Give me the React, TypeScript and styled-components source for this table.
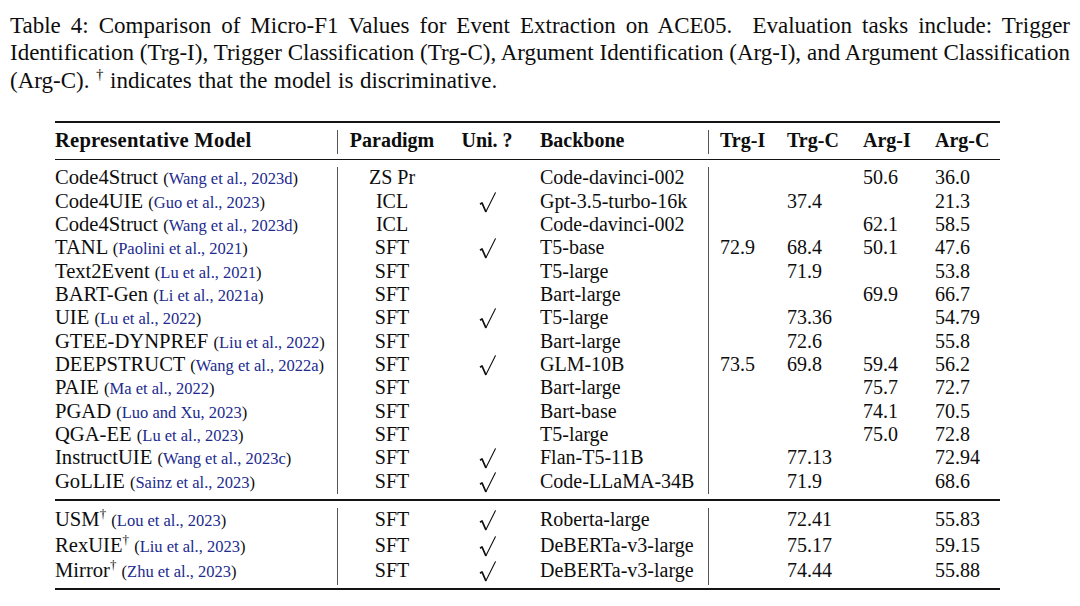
import * as React from 'react';
import styled, { createGlobalStyle } from 'styled-components';

type Row = {
  model: string;
  cite: string;
  paradigm: string;
  uni: boolean;
  backbone: string;
  scores: [string, string, string, string];
  disc?: boolean;
};

const generative: Row[] = [
  { model: 'Code4Struct', cite: 'Wang et al., 2023d', paradigm: 'ZS Pr', uni: false, backbone: 'Code-davinci-002', scores: ['', '', '50.6', '36.0'] },
  { model: 'Code4UIE', cite: 'Guo et al., 2023', paradigm: 'ICL', uni: true, backbone: 'Gpt-3.5-turbo-16k', scores: ['', '37.4', '', '21.3'] },
  { model: 'Code4Struct', cite: 'Wang et al., 2023d', paradigm: 'ICL', uni: false, backbone: 'Code-davinci-002', scores: ['', '', '62.1', '58.5'] },
  { model: 'TANL', cite: 'Paolini et al., 2021', paradigm: 'SFT', uni: true, backbone: 'T5-base', scores: ['72.9', '68.4', '50.1', '47.6'] },
  { model: 'Text2Event', cite: 'Lu et al., 2021', paradigm: 'SFT', uni: false, backbone: 'T5-large', scores: ['', '71.9', '', '53.8'] },
  { model: 'BART-Gen', cite: 'Li et al., 2021a', paradigm: 'SFT', uni: false, backbone: 'Bart-large', scores: ['', '', '69.9', '66.7'] },
  { model: 'UIE', cite: 'Lu et al., 2022', paradigm: 'SFT', uni: true, backbone: 'T5-large', scores: ['', '73.36', '', '54.79'] },
  { model: 'GTEE-DYNPREF', cite: 'Liu et al., 2022', paradigm: 'SFT', uni: false, backbone: 'Bart-large', scores: ['', '72.6', '', '55.8'] },
  { model: 'DEEPSTRUCT', cite: 'Wang et al., 2022a', paradigm: 'SFT', uni: true, backbone: 'GLM-10B', scores: ['73.5', '69.8', '59.4', '56.2'] },
  { model: 'PAIE', cite: 'Ma et al., 2022', paradigm: 'SFT', uni: false, backbone: 'Bart-large', scores: ['', '', '75.7', '72.7'] },
  { model: 'PGAD', cite: 'Luo and Xu, 2023', paradigm: 'SFT', uni: false, backbone: 'Bart-base', scores: ['', '', '74.1', '70.5'] },
  { model: 'QGA-EE', cite: 'Lu et al., 2023', paradigm: 'SFT', uni: false, backbone: 'T5-large', scores: ['', '', '75.0', '72.8'] },
  { model: 'InstructUIE', cite: 'Wang et al., 2023c', paradigm: 'SFT', uni: true, backbone: 'Flan-T5-11B', scores: ['', '77.13', '', '72.94'] },
  { model: 'GoLLIE', cite: 'Sainz et al., 2023', paradigm: 'SFT', uni: true, backbone: 'Code-LLaMA-34B', scores: ['', '71.9', '', '68.6'] },
];

const discriminative: Row[] = [
  { model: 'USM', cite: 'Lou et al., 2023', paradigm: 'SFT', uni: true, backbone: 'Roberta-large', scores: ['', '72.41', '', '55.83'], disc: true },
  { model: 'RexUIE', cite: 'Liu et al., 2023', paradigm: 'SFT', uni: true, backbone: 'DeBERTa-v3-large', scores: ['', '75.17', '', '59.15'], disc: true },
  { model: 'Mirror', cite: 'Zhu et al., 2023', paradigm: 'SFT', uni: true, backbone: 'DeBERTa-v3-large', scores: ['', '74.44', '', '55.88'], disc: true },
];

// column widths, table starts at x=55 and ends at x=1000
const COLUMNS = '282px 109px 82px 180px 67px 76px 72px 77px';
const SCORE_PAD = [11, 12, 12, 12];

// the \checkmark of the paper: short heavy hook, long hairline up to the right
const CheckMark = () => (
  <CheckSvg width="17" height="21" viewBox="0 0 17 21">
    <polyline points="1,12.2 3,10.9 6.9,19.8" fill="none" stroke="#111" strokeWidth="1.7" strokeLinejoin="round" />
    <line x1="6.9" y1="19.8" x2="16.4" y2="0.8" stroke="#111" strokeWidth="1.1" strokeLinecap="round" />
  </CheckSvg>
);

const TableRow = ({ row, tall }: { row: Row; tall?: boolean }) => (
  <RowLine $height={tall ? 25.5 : 23.35} $lh={tall ? 22 : 20}>
    <ModelCell>
      {row.model}
      {row.disc && <Dagger>†</Dagger>} <Paren>(</Paren>
      <Cite>{row.cite}</Cite>
      <Paren>)</Paren>
    </ModelCell>
    <Cell $divider $align="center">{row.paradigm}</Cell>
    <Cell $align="center">{row.uni && <CheckMark />}</Cell>
    <Cell $pad={12}>{row.backbone}</Cell>
    {row.scores.map((s, idx) => (
      <Cell key={`score-${idx}`} $pad={SCORE_PAD[idx]} $divider={idx === 0}>
        {s}
      </Cell>
    ))}
  </RowLine>
);

export default function App() {
  return (
    <Page>
      <GlobalStyle />
      <Caption>
        <CaptionLine $full>
          Table 4: Comparison of Micro-F1 Values for Event Extraction on ACE05.&nbsp; Evaluation tasks include: Trigger
        </CaptionLine>
        <CaptionLine $full>
          Identification (Trg-I), Trigger Classification (Trg-C), Argument Identification (Arg-I), and Argument Classification
        </CaptionLine>
        <CaptionLine $spread>
          (Arg-C). <CaptionDagger>†</CaptionDagger> indicates that the model is discriminative.
        </CaptionLine>
      </Caption>

      <Table>
        <Rule $thick={2} $top={26.4} />
        <HeaderRow $height={23.35} $lh={20} $mt={7.7}>
          <ModelCell $wide>Representative Model</ModelCell>
          <Cell $divider $align="center">Paradigm</Cell>
          <Cell $align="center">Uni. ?</Cell>
          <Cell $pad={12}>Backbone</Cell>
          <Cell $divider $pad={11}>Trg-I</Cell>
          <Cell $pad={12}>Trg-C</Cell>
          <Cell $pad={12}>Arg-I</Cell>
          <Cell $pad={12}>Arg-C</Cell>
        </HeaderRow>
        <Rule $thick={1} $top={5.05} />
        <Group $top={7.45}>
          {generative.map((row, idx) => (
            <TableRow row={row} key={`gen-${idx}`} />
          ))}
        </Group>
        <Rule $thick={1.5} $top={5.1} />
        <Group $top={7.4}>
          {discriminative.map((row, idx) => (
            <TableRow row={row} tall key={`disc-${idx}`} />
          ))}
        </Group>
        <Rule $thick={2} $top={3.65} />
      </Table>
    </Page>
  );
}

const GlobalStyle = createGlobalStyle`
  html, body {
    margin: 0;
    padding: 0;
    background: #ffffff;
  }
  body {
    font-family: 'Liberation Serif', 'Times New Roman', serif;
    color: #0d0d0d;
  }
`;

const Page = styled.div`
  width: 1080px;
  height: 606px;
  overflow: hidden;
`;

const Caption = styled.div`
  padding: 11.8px 10px 0;
  width: 1060px;
  font-size: 23px;
  line-height: 27.5px;
`;

const CaptionLine = styled.div<{ $full?: boolean; $spread?: boolean }>`
  white-space: ${(p) => (p.$full ? 'normal' : 'nowrap')};
  text-align: ${(p) => (p.$full ? 'justify' : 'left')};
  text-align-last: ${(p) => (p.$full ? 'justify' : 'left')};
  word-spacing: ${(p) => (p.$spread ? '0.8px' : '0')};
`;

const CaptionDagger = styled.sup`
  font-size: 15px;
  line-height: 0;
  vertical-align: 9px;
`;

const Table = styled.div`
  margin-left: 55px;
  width: 945px;
  font-size: 20px;
`;

const Rule = styled.div<{ $thick: number; $top: number }>`
  height: ${(p) => p.$thick}px;
  margin-top: ${(p) => p.$top}px;
  background: #141414;
`;

const Group = styled.div<{ $top: number }>`
  margin-top: ${(p) => p.$top}px;
`;

const RowLine = styled.div<{ $height: number; $lh: number; $mt?: number }>`
  display: grid;
  grid-template-columns: ${COLUMNS};
  height: ${(p) => p.$height}px;
  line-height: ${(p) => p.$lh}px;
  margin-top: ${(p) => p.$mt ?? 0}px;
  white-space: nowrap;
`;

const HeaderRow = styled(RowLine)`
  font-weight: bold;
`;

const Cell = styled.div<{ $divider?: boolean; $align?: 'left' | 'center'; $pad?: number }>`
  box-sizing: border-box;
  border-left: ${(p) => (p.$divider ? '1px solid #555' : 'none')};
  text-align: ${(p) => p.$align ?? 'left'};
  padding-left: ${(p) => p.$pad ?? 0}px;
`;

const ModelCell = styled.div<{ $wide?: boolean }>`
  font-size: 20.6px;
  letter-spacing: ${(p) => (p.$wide ? '0.2px' : '0')};
`;

const Cite = styled.span`
  font-size: 16.5px;
  color: #222a8e;
`;

const Paren = styled.span`
  font-size: 16.5px;
`;

const Dagger = styled.sup`
  font-size: 13px;
  line-height: 0;
  vertical-align: 8px;
`;

const CheckSvg = styled.svg`
  display: inline-block;
  vertical-align: -5px;
`;
